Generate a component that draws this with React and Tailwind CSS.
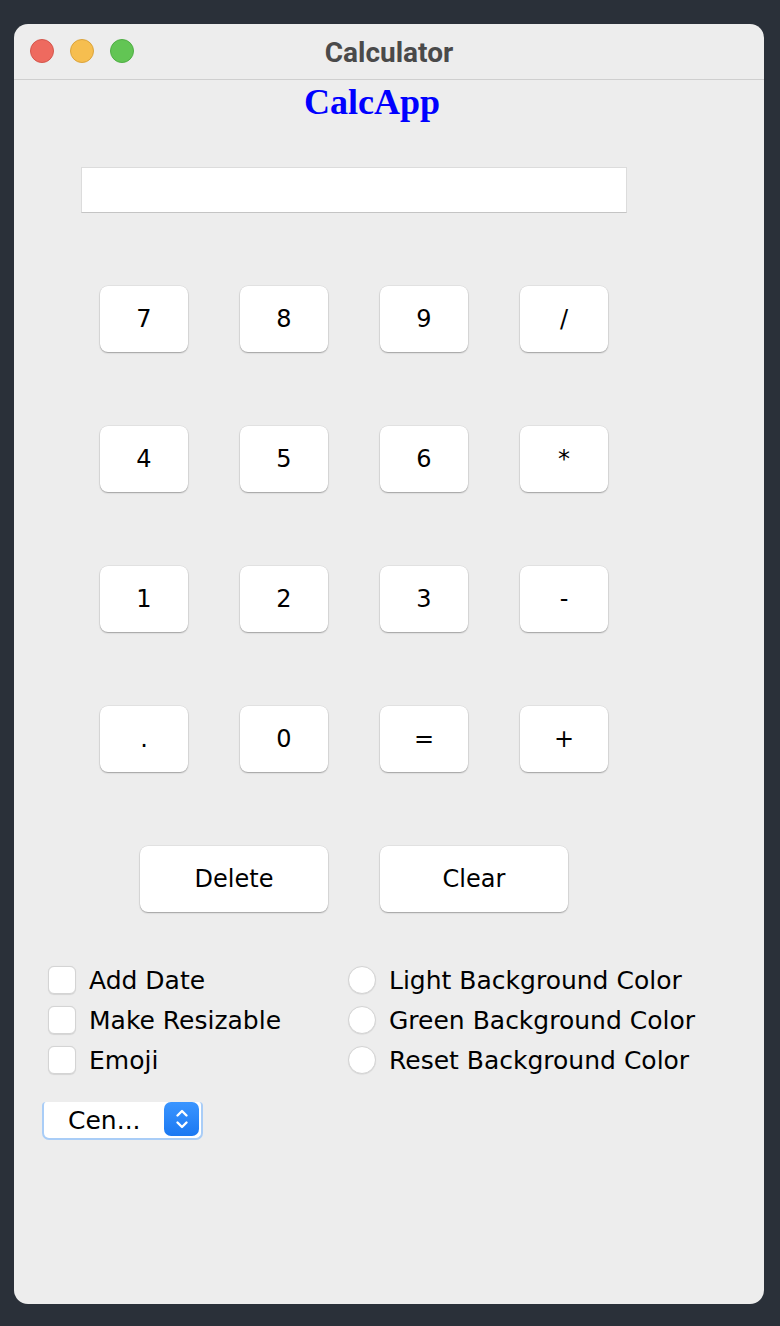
import React from "react";

const F = { fontFamily: '"DejaVu Sans", "Noto Sans", sans-serif' };

function Key({ label, wide }) {
  return (
    <div
      className={`${wide ? "w-[188px]" : "w-[88px]"} h-[66px] bg-white rounded-[8px] flex items-center justify-center text-[24px] text-black shadow-[0_1px_1.5px_rgba(0,0,0,0.3),0_0_0_0.5px_rgba(0,0,0,0.08)]`}
      style={F}
    >
      {label}
    </div>
  );
}

function Check({ label }) {
  return (
    <div className="flex items-center h-[40px]">
      <div className="w-[28px] h-[28px] bg-white rounded-[6px] border border-[#d4d4d4] shadow-[0_0.5px_1px_rgba(0,0,0,0.1)]" />
      <span className="ml-[13px] text-[25px] text-black leading-none" style={F}>{label}</span>
    </div>
  );
}

function Radio({ label }) {
  return (
    <div className="flex items-center h-[40px]">
      <div className="w-[28px] h-[28px] bg-white rounded-full border border-[#d4d4d4] shadow-[0_0.5px_1px_rgba(0,0,0,0.1)]" />
      <span className="ml-[13px] text-[25px] text-black leading-none" style={F}>{label}</span>
    </div>
  );
}

export default function App() {
  const rows = [
    ["7", "8", "9", "/"],
    ["4", "5", "6", "*"],
    ["1", "2", "3", "-"],
    [".", "0", "=", "+"],
  ];
  return (
    <div className="w-[780px] h-[1326px] bg-[#2a3039] pt-[24px] pl-[14px]">
      <div className="w-[750px] h-[1280px] bg-[#ededed] rounded-[14px] overflow-hidden flex flex-col">
        {/* title bar */}
        <div className="relative h-[56px] border-b border-[#cfcfcf] flex items-center justify-center shrink-0">
          <div className="absolute left-[16px] top-[15px] flex gap-[16px]">
            <div className="w-[24px] h-[24px] rounded-full bg-[#ee6a5f] border border-[#d4564c]" />
            <div className="w-[24px] h-[24px] rounded-full bg-[#f6be4f] border border-[#dba43c]" />
            <div className="w-[24px] h-[24px] rounded-full bg-[#62c554] border border-[#4fae44]" />
          </div>
          <span
            className="text-[28px] font-bold text-[#4a4a4a] pt-[2px]"
            style={{ fontFamily: 'Roboto, "Liberation Sans", sans-serif' }}
          >
            Calculator
          </span>
        </div>

        {/* CalcApp heading */}
        <div className="flex justify-center pr-[34px] h-[44px] items-center">
          <span
            className="text-[36px] font-bold text-[#0000ff] leading-none"
            style={{ fontFamily: '"Liberation Serif", serif' }}
          >
            CalcApp
          </span>
        </div>

        {/* display */}
        <div className="pl-[67px] pt-[43px]">
          <div className="w-[546px] h-[46px] bg-white border border-[#dcdcdc] border-b-[#c4c4c4]" />
        </div>

        {/* keypad */}
        <div className="pl-[86px] pt-[73px] flex flex-col gap-[74px]">
          {rows.map((r, i) => (
            <div key={i} className="flex gap-[52px]">
              {r.map((k) => (
                <Key key={k} label={k} />
              ))}
            </div>
          ))}
          <div className="flex gap-[52px] pl-[40px]">
            <Key label="Delete" wide />
            <Key label="Clear" wide />
          </div>
        </div>

        {/* options */}
        <div className="pl-[34px] pt-[48px] flex">
          <div className="w-[300px] flex flex-col">
            <Check label="Add Date" />
            <Check label="Make Resizable" />
            <Check label="Emoji" />
          </div>
          <div className="flex flex-col">
            <Radio label="Light Background Color" />
            <Radio label="Green Background Color" />
            <Radio label="Reset Background Color" />
          </div>
        </div>

        {/* combo */}
        <div className="pl-[28px] pt-[22px]">
          <div className="w-[161px] h-[38px] bg-white rounded-b-[7px] rounded-t-[4px] border-2 border-t-0 border-[#a9cdf7] flex items-center relative">
            <span className="ml-[24px] text-[25px] text-black leading-none" style={F}>Cen...</span>
            <div className="absolute right-[2px] top-[0px] w-[35px] h-[34px] rounded-[7px] bg-gradient-to-b from-[#3a95ff] to-[#1a78f2] flex items-center justify-center">
              <svg width="14" height="24" viewBox="0 0 14 24" fill="none" stroke="white" strokeWidth="2.4" strokeLinecap="round" strokeLinejoin="round">
                <path d="M2.5 8.5 L7 4 L11.5 8.5" />
                <path d="M2.5 15.5 L7 20 L11.5 15.5" />
              </svg>
            </div>
          </div>
        </div>
      </div>
    </div>
  );
}
